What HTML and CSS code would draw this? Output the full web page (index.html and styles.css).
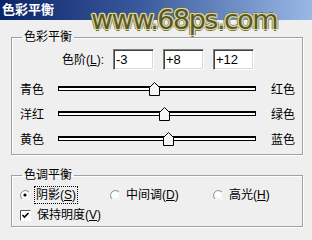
FILE: index.html
```html
<!DOCTYPE html>
<html lang="zh-CN">
  <head>
    <meta charset="UTF-8" />
    <title>色彩平衡</title>
    <link rel="stylesheet" href="styles.css">
  </head>

  <body>
    <div class="dialog">
      <div class="titleBar">色彩平衡</div>
      <div class="watermark">www.68ps.com</div>

      <fieldset class="group">
        <legend>色彩平衡</legend>
        <div class="levelRow">
          <span class="levelLabel">色阶(<u>L</u>):</span>
          <span class="numBox">-3</span>
          <span class="numBox">+8</span>
          <span class="numBox">+12</span>
        </div>
        <div class="sliderRow">
          <span class="leftName">青色</span>
          <div class="track">
            <div class="trackLine"></div>
            <svg class="thumb" style="left: 48.5%" width="11" height="14" viewBox="0 0 11 14"><polygon points="0.5,13.5 0.5,5.5 5.5,0.5 10.5,5.5 10.5,13.5" fill="#f6f6f6" stroke="#000" /></svg>
          </div>
          <span class="rightName">红色</span>
        </div>
        <div class="sliderRow">
          <span class="leftName">洋红</span>
          <div class="track">
            <div class="trackLine"></div>
            <svg class="thumb" style="left: 54%" width="11" height="14" viewBox="0 0 11 14"><polygon points="0.5,13.5 0.5,5.5 5.5,0.5 10.5,5.5 10.5,13.5" fill="#f6f6f6" stroke="#000" /></svg>
          </div>
          <span class="rightName">绿色</span>
        </div>
        <div class="sliderRow">
          <span class="leftName">黄色</span>
          <div class="track">
            <div class="trackLine"></div>
            <svg class="thumb" style="left: 56%" width="11" height="14" viewBox="0 0 11 14"><polygon points="0.5,13.5 0.5,5.5 5.5,0.5 10.5,5.5 10.5,13.5" fill="#f6f6f6" stroke="#000" /></svg>
          </div>
          <span class="rightName">蓝色</span>
        </div>
      </fieldset>

      <fieldset class="group toneGroup">
        <legend>色调平衡</legend>
        <div class="radioRow">
          <label class="option">
            <svg width="10" height="10" viewBox="0 0 10 10"><path d="M9,2 A4.5,4.5 0 1 0 2,9" fill="none" stroke="#888" /><path d="M2,9 A4.5,4.5 0 0 0 9,2" fill="none" stroke="#fff" /><circle cx="5" cy="5" r="3.5" fill="#fff" /><circle cx="5" cy="5" r="1.6" fill="#000" /></svg>
            <span class="focusText">阴影(<u>S</u>)</span>
          </label>
          <label class="option">
            <svg width="10" height="10" viewBox="0 0 10 10"><path d="M9,2 A4.5,4.5 0 1 0 2,9" fill="none" stroke="#888" /><path d="M2,9 A4.5,4.5 0 0 0 9,2" fill="none" stroke="#fff" /><circle cx="5" cy="5" r="3.5" fill="#fff" /></svg>
            <span>中间调(<u>D</u>)</span>
          </label>
          <label class="option">
            <svg width="10" height="10" viewBox="0 0 10 10"><path d="M9,2 A4.5,4.5 0 1 0 2,9" fill="none" stroke="#888" /><path d="M2,9 A4.5,4.5 0 0 0 9,2" fill="none" stroke="#fff" /><circle cx="5" cy="5" r="3.5" fill="#fff" /></svg>
            <span>高光(<u>H</u>)</span>
          </label>
        </div>
        <div class="checkRow">
          <label class="option">
            <svg width="11" height="11" viewBox="0 0 11 11"><rect x="0.5" y="0.5" width="10" height="10" fill="#fff" stroke="#fff" /><path d="M0.5,10.5 V0.5 H10.5" fill="none" stroke="#555" /><path d="M2.5,5 L4.5,7 L8.5,3" fill="none" stroke="#000" stroke-width="1.6" /></svg>
            <span>保持明度(<u>V</u>)</span>
          </label>
        </div>
      </fieldset>
    </div>
  </body>
</html>
```

FILE: styles.css
```css
body {
  margin: 0;
  padding: 0;
  font-family: "Liberation Sans", "Noto Sans CJK SC", sans-serif;
  font-size: 12px;
  line-height: 14px;
  color: #000000;
}

.dialog {
  position: relative;
  width: 312px;
  height: 240px;
  overflow: hidden;
  background: #efefef;
}

.titleBar {
  height: 20px;
  padding-left: 2px;
  line-height: 20px;
  font-size: 13px;
  font-weight: bold;
  color: #ffffff;
  background: linear-gradient(to right, #0c2468, #3a5a9e 45%, #9ab8e4);
}

/* 水印，压在标题栏上 */
.watermark {
  position: absolute;
  left: 91px;
  top: 3px;
  font-family: "DejaVu Sans", sans-serif;
  font-size: 27px;
  line-height: 34px;
  letter-spacing: -1.5px;
  color: #5c5a24;
  text-shadow: 1px 0 #d8d6aa, -1px 0 #d8d6aa, 0 1px #d8d6aa, 0 -1px #d8d6aa,
    1px 1px #d8d6aa, -1px -1px #d8d6aa, 1px -1px #d8d6aa, -1px 1px #d8d6aa,
    2px 0 #767440, -2px 0 #767440, 0 2px #767440, 0 -2px #767440;
}

.group {
  margin: 10px 9px 0 11px;
  padding: 5px 8px 1px 8px;
  border: 1px solid #a0a0a0;
  box-shadow: inset 1px 1px 0 #ffffff, 1px 1px 0 #ffffff;
  min-width: 0;
}

.group legend {
  margin-left: 2px;
  padding: 0 2px;
  line-height: 14px;
}

.toneGroup {
  margin-top: 13px;
  padding: 4px 8px 2px 8px;
}

.levelRow {
  display: flex;
  align-items: center;
  gap: 9px;
  height: 21px;
  margin-bottom: 8px;
}

.levelLabel {
  width: 84px;
  text-align: right;
}

.numBox {
  width: 41px;
  height: 21px;
  box-sizing: border-box;
  padding: 2px 0 0 2px;
  font-size: 13px;
  line-height: 15px;
  background: #ffffff;
  border: 1px solid;
  border-color: #808080 #ffffff #ffffff #808080;
  box-shadow: inset 1px 1px 0 #404040, inset -1px -1px 0 #d8d8d8;
}

.sliderRow {
  display: grid;
  grid-template-columns: 38px 198px 1fr;
  height: 25px;
  align-items: start;
}

.leftName,
.rightName {
  padding-top: 5px;
  white-space: nowrap;
}

.rightName {
  padding-left: 15px;
}

.track {
  position: relative;
  height: 25px;
}

.trackLine {
  margin-top: 8px;
  height: 5px;
  box-sizing: border-box;
  background: #ffffff;
  border: 1px solid #000000;
  border-top-width: 2px;
}

.thumb {
  position: absolute;
  top: 4px;
  margin-left: -5.5px;
}

.radioRow {
  display: grid;
  grid-template-columns: 90px 103px 1fr;
  height: 18px;
  align-items: center;
}

.checkRow {
  display: flex;
  height: 18px;
  margin-top: 2px;
  align-items: center;
}

.option {
  display: flex;
  align-items: center;
  gap: 6px;
}

.focusText {
  outline: 1px dotted #000000;
  outline-offset: 1px;
}
```
